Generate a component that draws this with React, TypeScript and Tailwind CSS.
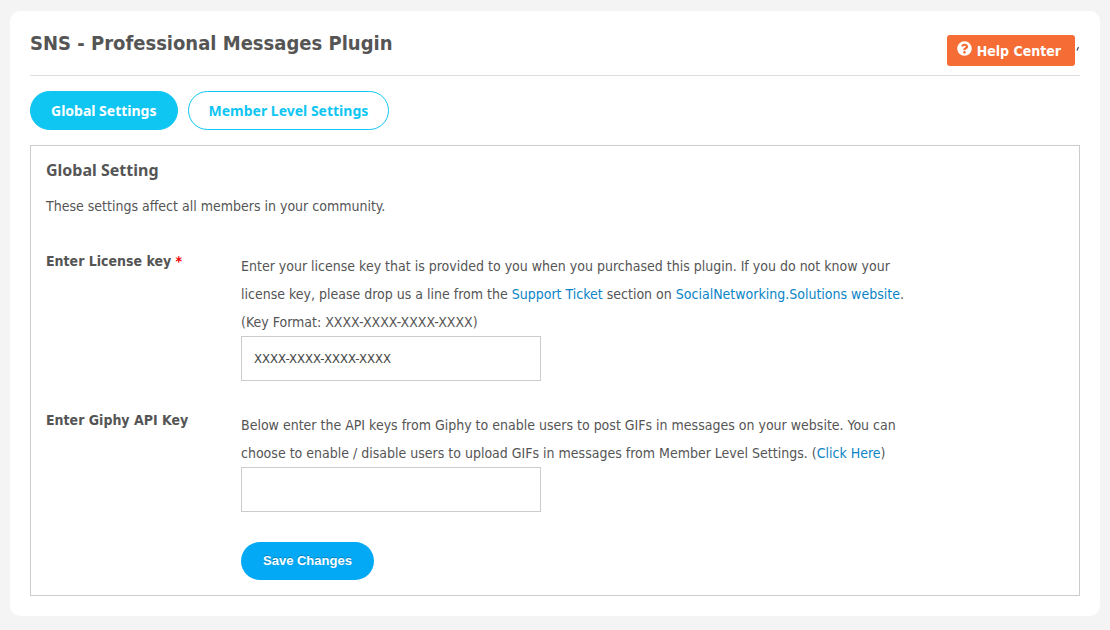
import { useState } from "react";
import type { FormEvent, ReactNode } from "react";
import { FaQuestionCircle } from "react-icons/fa";

const tabs = ["Global Settings", "Member Level Settings"];

function FormRow({ id, label, required, description, children }: {
  id: string;
  label: string;
  required?: boolean;
  description: ReactNode;
  children: ReactNode;
}) {
  return (
    <div className="flex">
      <label htmlFor={id} className="w-[195px] shrink-0 font-bold leading-7">
        {label}
        {required && <span className="text-[#f00000]"> *</span>}
      </label>
      <div className="min-w-0 flex-1 pt-[5px]">
        <p className="max-w-[670px] leading-7">{description}</p>
        {children}
      </div>
    </div>
  );
}

export default function App() {
  const [activeTab, setActiveTab] = useState(tabs[0]);
  const [licenseKey, setLicenseKey] = useState("XXXX-XXXX-XXXX-XXXX");
  const [giphyKey, setGiphyKey] = useState("");

  const handleSave = (e: FormEvent) => {
    e.preventDefault();
  };

  const inputClass =
    "block h-[45px] w-full max-w-[300px] border border-[#cccccc] bg-white px-3 text-[13px] text-[#444444] outline-none";

  return (
    <div className="min-h-screen bg-[#f4f4f4] px-2.5 pt-[11px] pb-3.5 font-['DejaVu_Sans_Condensed','DejaVu_Sans',sans-serif] text-sm text-[#555555]">
      <div className="rounded-[10px] bg-white p-5 pt-0">
        <header className="flex items-start justify-between border-b border-[#dddddd]">
          <h1 className="pt-[18px] pb-[18px] text-xl font-bold leading-7">
            SNS - Professional Messages Plugin
          </h1>
          <div className="flex items-start pt-6">
            <a
              href="#help"
              className="flex h-[31px] items-center gap-[5px] rounded-[3px] bg-[#f56c34] pr-3.5 pl-2.5 font-bold text-white"
            >
              <FaQuestionCircle className="mb-1 size-[15px]" />
              Help Center
            </a>
            <svg className="mt-2.5 h-2 w-[5px]" viewBox="0 0 5 8">
              <path d="M3.5 2 2 5.5" stroke="#444466" strokeWidth="1.2" />
            </svg>
          </div>
        </header>

        <nav className="flex gap-2.5 py-[15px]">
          {tabs.map((tab) => (
            <button
              key={tab}
              type="button"
              onClick={() => setActiveTab(tab)}
              className={`h-[39px] rounded-[20px] border border-[#0fc6f2] px-5 font-['Noto_Sans',sans-serif] font-bold ${
                tab === activeTab ? "bg-[#0fc6f2] text-white" : "bg-white text-[#0fc6f2]"
              }`}
            >
              {tab}
            </button>
          ))}
        </nav>

        <form onSubmit={handleSave} className="border border-[#cccccc] p-[15px] pt-3">
          <h2 className="font-['Noto_Sans',sans-serif] text-base font-bold leading-6">Global Setting</h2>
          <p className="pt-2.5 leading-7">These settings affect all members in your community.</p>

          <div className="flex flex-col gap-[25px] pt-[27px]">
            <FormRow
              id="license"
              label="Enter License key"
              required
              description={
                <>
                  Enter your license key that is provided to you when you purchased this plugin. If you do not know your
                  <br />
                  license key, please drop us a line from the{" "}
                  <a href="#support" className="text-[#0a84c6]">Support Ticket</a> section on{" "}
                  <a href="#website" className="text-[#0a84c6]">SocialNetworking.Solutions website</a>.
                  <br />
                  (Key Format: XXXX-XXXX-XXXX-XXXX)
                </>
              }
            >
              <input
                id="license"
                type="text"
                value={licenseKey}
                onChange={(e) => setLicenseKey(e.target.value)}
                className={inputClass}
              />
            </FormRow>

            <FormRow
              id="giphy"
              label="Enter Giphy API Key"
              description={
                <>
                  Below enter the API keys from Giphy to enable users to post GIFs in messages on your website. You can
                  <br />
                  choose to enable / disable users to upload GIFs in messages from Member Level Settings. (
                  <a href="#giphy-help" className="text-[#0a84c6]">Click Here</a>)
                </>
              }
            >
              <input
                id="giphy"
                type="text"
                value={giphyKey}
                onChange={(e) => setGiphyKey(e.target.value)}
                className={inputClass}
              />
            </FormRow>
          </div>

          <div className="pt-[30px] pl-[195px]">
            <button
              type="submit"
              className="block h-[38px] rounded-[20px] bg-[#03a9f4] px-[22px] font-['Liberation_Sans',sans-serif] text-[13px] font-bold text-white [text-shadow:0_-1px_0_rgba(0,0,0,0.25)]"
            >
              Save Changes
            </button>
          </div>
        </form>
      </div>
    </div>
  );
}
